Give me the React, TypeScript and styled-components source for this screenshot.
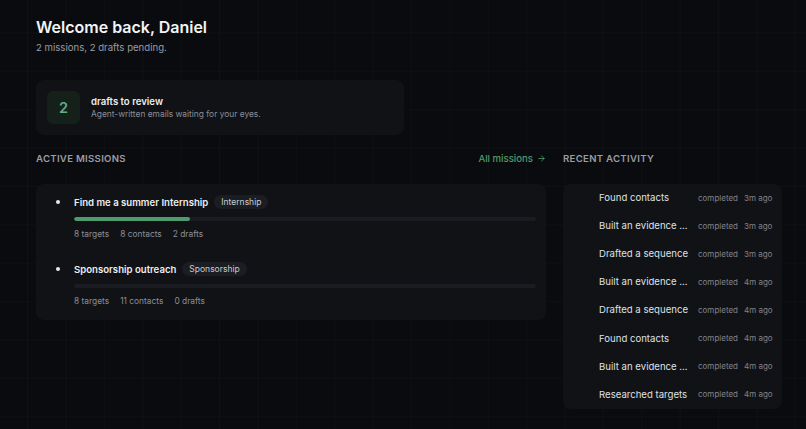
import React from "react";
import styled, { createGlobalStyle } from "styled-components";

const Global = createGlobalStyle`
  html, body { margin: 0; padding: 0; background: #0a0b0e; }
  body { font-family: Inter, "Noto Sans", sans-serif; -webkit-font-smoothing: antialiased; }
  * { box-sizing: border-box; }
`;

const Page = styled.div`
  width: 806px;
  height: 429px;
  overflow: hidden;
  background-color: #0a0b0e;
  background-image:
    linear-gradient(to right, rgba(255,255,255,0.018) 1px, transparent 1px),
    linear-gradient(to bottom, rgba(255,255,255,0.018) 1px, transparent 1px);
  background-size: 38.4px 38.4px;
  background-position: 27px -6px;
  padding: 16px 24px 0 36px;
  display: flex;
  flex-direction: column;
`;

const Title = styled.h1`
  margin: 0;
  font-size: 16px;
  font-weight: 600;
  color: #f3f4f6;
  line-height: 22px;
`;

const Subtitle = styled.p`
  margin: 3px 0 0;
  font-size: 9.6px;
  line-height: 14px;
  color: #9a9ca3;
`;

const DraftsCard = styled.div`
  margin-top: 25px;
  width: 368px;
  height: 55px;
  background: #111216;
  border-radius: 8px;
  display: flex;
  align-items: center;
  padding: 0 11px;
  gap: 11px;
`;

const CountBox = styled.div`
  width: 33px;
  height: 33px;
  border-radius: 6px;
  background: #15201b;
  color: #5fae80;
  font-size: 14.5px;
  font-weight: 600;
  display: flex;
  align-items: center;
  justify-content: center;
`;

const DraftsText = styled.div`
  display: flex;
  flex-direction: column;
  gap: 1px;
`;

const DraftsTitle = styled.div`
  font-size: 9.6px;
  font-weight: 600;
  color: #eceef1;
  line-height: 12px;
`;

const DraftsSub = styled.div`
  font-size: 8.4px;
  color: #8b8e96;
  line-height: 11px;
`;

const Columns = styled.div`
  margin-top: 16px;
  display: grid;
  grid-template-columns: 510px 219px;
  column-gap: 17px;
  align-items: start;
`;

const Column = styled.div`
  display: flex;
  flex-direction: column;
`;

const SectionHead = styled.div`
  display: flex;
  justify-content: space-between;
  align-items: center;
  height: 14px;
  margin-bottom: 19px;
`;

const SectionTitle = styled.div`
  font-size: 9.6px;
  font-weight: 600;
  letter-spacing: 0.3px;
  text-transform: uppercase;
  color: #9a9ca3;
`;

const Link = styled.a`
  font-size: 9.6px;
  font-weight: 500;
  color: #4e9a6c;
  text-decoration: none;
  display: flex;
  align-items: center;
  gap: 4px;
`;

const Card = styled.div`
  background: #111216;
  border-radius: 8px;
`;

const MissionsCard = styled(Card)`
  padding: 11px 10px 13px 20px;
  display: flex;
  flex-direction: column;
  gap: 22px;
`;

const Mission = styled.div`
  display: grid;
  grid-template-columns: 18px 1fr;
`;

const Bullet = styled.span`
  width: 4px;
  height: 4px;
  border-radius: 50%;
  background: #e9eaee;
  margin-top: 5px;
`;

const MissionBody = styled.div`
  display: flex;
  flex-direction: column;
`;

const MissionHead = styled.div`
  display: flex;
  align-items: center;
  gap: 6px;
  height: 14px;
`;

const MissionTitle = styled.span`
  font-size: 9.6px;
  font-weight: 600;
  color: #eceef1;
`;

const Pill = styled.span`
  font-size: 8.5px;
  color: #c9cbd1;
  background: #1b1d22;
  border-radius: 7px;
  padding: 2px 7px;
  line-height: 10px;
`;

const Track = styled.div`
  margin-top: 8px;
  height: 4px;
  border-radius: 2px;
  background: #1a1c21;
  overflow: hidden;
`;

const Fill = styled.div`
  height: 100%;
  border-radius: 2px;
  background: #4f9a6e;
`;

const Stats = styled.div`
  margin-top: 8px;
  display: flex;
  gap: 11px;
  font-size: 8.4px;
  color: #8b8e96;
  line-height: 11px;
`;

const ActivityCard = styled(Card)`
  padding: 0 8px 0 36px;
  display: flex;
  flex-direction: column;
`;

const ActivityRow = styled.div`
  height: 28.1px;
  display: flex;
  align-items: center;
  padding-bottom: 1px;
`;

const ActivityLabel = styled.span`
  width: 91px;
  font-size: 9.6px;
  color: #dfe1e5;
  white-space: nowrap;
  overflow: hidden;
  text-overflow: ellipsis;
`;

const Status = styled.span`
  margin-left: 8px;
  font-size: 8px;
  color: #80838b;
  white-space: nowrap;
`;

const Time = styled.span`
  margin-left: 6px;
  font-size: 8px;
  color: #80838b;
  white-space: nowrap;
`;

const missions = [
  { title: "Find me a summer Internship", tag: "Internship", progress: 25, stats: ["8 targets", "8 contacts", "2 drafts"] },
  { title: "Sponsorship outreach", tag: "Sponsorship", progress: 0, stats: ["8 targets", "11 contacts", "0 drafts"] },
];

const activity = [
  ["Found contacts", "3m ago"],
  ["Built an evidence pack", "3m ago"],
  ["Drafted a sequence", "3m ago"],
  ["Built an evidence pack", "4m ago"],
  ["Drafted a sequence", "4m ago"],
  ["Found contacts", "4m ago"],
  ["Built an evidence pack", "4m ago"],
  ["Researched targets", "4m ago"],
];

export default function App() {
  return (
    <Page>
      <Global />
      <Title>Welcome back, Daniel</Title>
      <Subtitle>2 missions, 2 drafts pending.</Subtitle>
      <DraftsCard>
        <CountBox>2</CountBox>
        <DraftsText>
          <DraftsTitle>drafts to review</DraftsTitle>
          <DraftsSub>Agent-written emails waiting for your eyes.</DraftsSub>
        </DraftsText>
      </DraftsCard>
      <Columns>
        <Column>
          <SectionHead>
            <SectionTitle>Active missions</SectionTitle>
            <Link href="#">
              All missions
              <svg width="9" height="9" viewBox="0 0 24 24" fill="none" stroke="currentColor" strokeWidth="2.2" strokeLinecap="round" strokeLinejoin="round">
                <path d="M5 12h14" />
                <path d="m12 5 7 7-7 7" />
              </svg>
            </Link>
          </SectionHead>
          <MissionsCard>
            {missions.map((m) => (
              <Mission key={m.title}>
                <Bullet />
                <MissionBody>
                  <MissionHead>
                    <MissionTitle>{m.title}</MissionTitle>
                    <Pill>{m.tag}</Pill>
                  </MissionHead>
                  <Track>
                    <Fill style={{ width: `${m.progress}%` }} />
                  </Track>
                  <Stats>
                    {m.stats.map((s) => (
                      <span key={s}>{s}</span>
                    ))}
                  </Stats>
                </MissionBody>
              </Mission>
            ))}
          </MissionsCard>
        </Column>
        <Column>
          <SectionHead>
            <SectionTitle>Recent activity</SectionTitle>
          </SectionHead>
          <ActivityCard>
            {activity.map(([label, time], i) => (
              <ActivityRow key={i}>
                <ActivityLabel>{label}</ActivityLabel>
                <Status>completed</Status>
                <Time>{time}</Time>
              </ActivityRow>
            ))}
          </ActivityCard>
        </Column>
      </Columns>
    </Page>
  );
}
